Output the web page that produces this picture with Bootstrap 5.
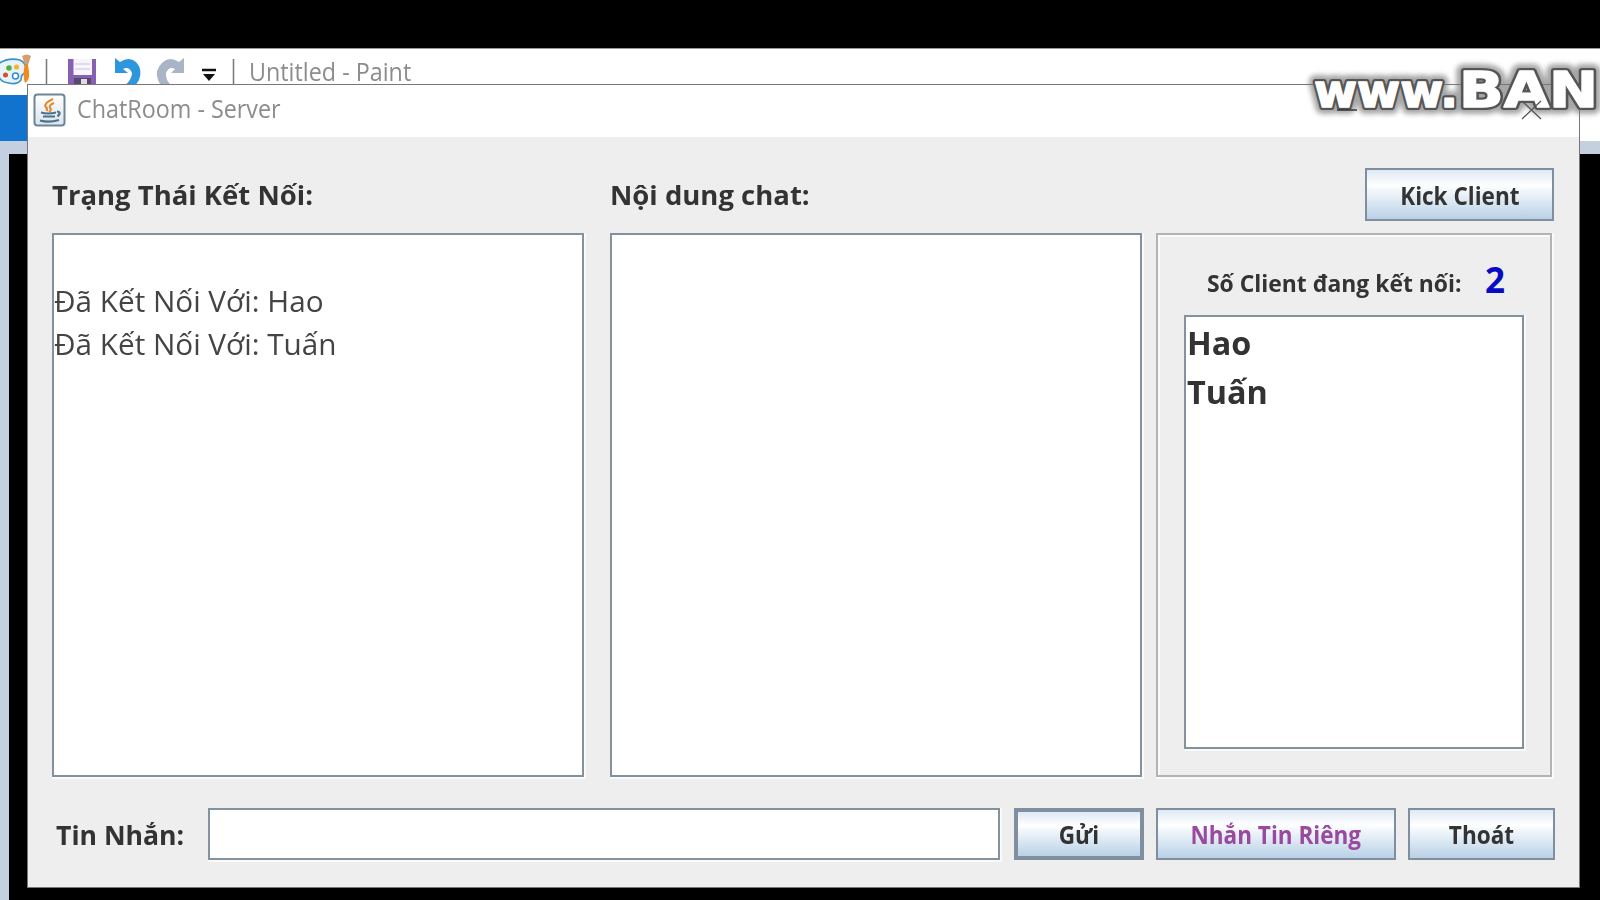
<!DOCTYPE html>
<html lang="vi">
<head>
<meta charset="utf-8">
<title>ChatRoom - Server</title>
<link href="https://cdn.jsdelivr.net/npm/bootstrap@5.3.0/dist/css/bootstrap.min.css" rel="stylesheet">
<style>
body{background:#000;width:1600px;height:900px;overflow:hidden;padding-top:48px;font-family:"Open Sans","Noto Sans",sans-serif;color:#333}
.paint{height:852px;background:#c4d0e0}
.paint-title{height:47px;background:#fff;border-top:1px solid #999}
.paint-ribbon{height:46px;background:linear-gradient(90deg,#1273cf 40px,#fff 40px)}
.paint-canvas{margin:13px 0 0 9px;height:746px;background:#000}
.fit{display:inline-block;white-space:nowrap;line-height:1;transform:scaleX(var(--s,1));transform-origin:0 50%}
.btn .fit{transform-origin:50% 50%;padding-top:3px}
.win{left:27px;top:84px;width:1553px;height:804px;background:#eee;border:1px solid #777}
.win-title{height:52px;background:#fff;padding-left:5px;gap:11px}
.cap{font-size:25px;color:#8c8c8c;--s:.933}
.paint-cap{padding:4px 0 0 9px}
.win-title .cap{padding-bottom:4px}
.win-body{padding:31px 25px 27px 24px;height:750px}
.head{height:53px}
.head .btn{width:189px;height:53px}
.lbl{font-size:27px;font-weight:700}
.head .lbl{padding-top:2px;--s:1.018}
.sunk{background:#fff;border:2px solid #84929f;box-shadow:1px 1px 0 1px #fafafa}
.panes{height:544px;margin-top:12px}
.pane{width:532px;height:544px;font-size:30px;line-height:42.5px;padding-top:45px;color:#444;--s:.99}
.pane .fit{line-height:42.5px}
.side{width:396px;height:544px;border:2px solid #b3b3b3;box-shadow:inset 2px 2px 0 #fafafa,1px 1px 0 1px #fafafa;padding:24px 26px 26px 26px}
.count{height:56px;padding-left:23px}
.count .lbl{width:278px;font-size:24px;padding-top:6px;--s:.953}
.num{font-size:35px;font-weight:700;color:#0a0ac4;margin-top:-5px}
.names{height:434px;font-size:33px;font-weight:700;line-height:49px;padding-left:1px;--s:.98}
.names .fit{line-height:49px;display:block;position:relative;top:1px}
.foot{height:52px;margin-top:31px}
.foot .lbl{width:156px;padding:3px 0 0 4px;--s:.985}
.btn{--bs-btn-border-radius:0;border:2px solid #7f8f9f;background:linear-gradient(#dfe9f4 0,#fff 32%,#f4f8fc 40%,#b9d1e6 100%);padding:0;font-size:24.5px;font-weight:700;color:#333;line-height:1;--s:.92}
.btn-def{border-width:4px}
.violet{color:#9a4a9e}
.mark-w{left:1280px;top:48px}
</style>
</head>
<body>
<div class="paint">
  <div class="paint-title d-flex">
    <svg width="240" height="46" viewBox="0 49 240 46">
      <path d="M-2 64Q8 57 20 60Q28 64 25 73Q21 74 21 80Q17 85 9 83Q0 82-2 75Z" fill="#e7f3fb" stroke="#3b91c4" stroke-width="1.6"/>
      <circle cx="9" cy="68" r="2.8" fill="#55ae3c"/><circle cx="16.500" cy="67" r="2.600" fill="#f4b52c"/><circle cx="5.500" cy="75" r="2.500" fill="#d94b32"/><circle cx="15.500" cy="76" r="3" fill="#fff" stroke="#2f8cd0" stroke-width="1.500"/>
      <path d="M22 56Q27 53 31 56L28 65H25Z" fill="#d19f72"/><path d="M25 64H28L29 72Q30 80 25 83Q22 75 25 64Z" fill="#f08a1d"/>
      <path d="M46.500 59V84M233.500 59V84" stroke="#777" stroke-width="1.500"/>
      <path d="M68 59H96V86H68Z" fill="#8560b5"/><path d="M73.500 59H92V75H73.500Z" fill="#f7f5fb"/><path d="M75 64H90M75 69H90" stroke="#d8d2e3" stroke-width="1.500"/><path d="M74 78H91V85H74Z" fill="#57486c"/><path d="M81 79H87V85H81Z" fill="#ddd"/>
      <path d="M115 58L120 62Q129 56 136 62Q143 69 139 80L135 86H124Q132 80 132 73Q129 66 123 69L128 73H115Z" fill="#2d96dc"/>
      <path d="M184 58L179 62Q170 56 163 62Q154 70 158 80L161 86H172Q165 80 166 73Q169 66 175 69L171 73H184Z" fill="#a9b4c6"/>
      <path d="M202 70H216" stroke="#111" stroke-width="2.500"/><path d="M203 74H215L209 81Z" fill="#111"/>
    </svg>
    <div class="cap paint-cap"><span class="fit">Untitled - Paint</span></div>
  </div>
  <div class="paint-ribbon"></div>
  <div class="paint-canvas"></div>
</div>

<main class="win position-absolute">
  <div class="win-title d-flex align-items-center">
    <svg width="33" height="34" viewBox="0 0 33 34" style="margin-top:-2px">
      <defs><linearGradient id="jb" x2="0" y2="1"><stop stop-color="#fff"/><stop offset="1" stop-color="#dbe5ee"/></linearGradient></defs>
      <rect x="1.500" y="1.500" width="30" height="31" rx="3" fill="url(#jb)" stroke="#6d8599" stroke-width="2"/>
      <path d="M20 6Q11 10 12.500 13.500Q15 16 13.500 18M21 10Q16 12 17 14.500Q19 17 16 19" fill="none" stroke="#e9892f" stroke-width="2.200"/>
      <path d="M8 19.500Q15 21.500 23 19.500M24 18.500Q29 19 24.500 23.500M10 23.500H22M7 27.500Q16 30 26 27" fill="none" stroke="#4b7089" stroke-width="2.200"/>
    </svg>
    <div class="cap"><span class="fit">ChatRoom - Server</span></div>
  </div>
  <div class="win-body">
    <div class="head d-flex align-items-center">
      <div class="lbl" style="width:558px"><span class="fit">Trạng Thái Kết Nối:</span></div>
      <div class="lbl"><span class="fit">Nội dung chat:</span></div>
      <button class="btn ms-auto"><span class="fit">Kick Client</span></button>
    </div>
    <div class="panes d-flex">
      <div class="pane sunk"><span class="fit">Đã Kết Nối Với: Hao</span><br><span class="fit">Đã Kết Nối Với: Tuấn</span></div>
      <div class="pane sunk" style="margin-left:26px"></div>
      <div class="side" style="margin-left:14px">
        <div class="count d-flex align-items-start">
          <div class="lbl"><span class="fit">Số Client đang kết nối:</span></div>
          <div class="num"><span class="fit">2</span></div>
        </div>
        <div class="names sunk"><span class="fit">Hao</span><span class="fit">Tuấn</span></div>
      </div>
    </div>
    <div class="foot d-flex">
      <div class="lbl align-self-center"><span class="fit">Tin Nhắn:</span></div>
      <div class="sunk" style="width:792px"></div>
      <button class="btn btn-def" style="width:130px;margin-left:14px"><span class="fit">Gửi</span></button>
      <button class="btn violet" style="width:240px;margin-left:12px"><span class="fit">Nhắn Tin Riêng</span></button>
      <button class="btn" style="width:147px;margin-left:12px;margin-right:-2px"><span class="fit">Thoát</span></button>
    </div>
  </div>
</main>

<svg class="mark-w position-absolute" width="320" height="90" viewBox="1280 48 320 90">
  <defs><filter id="soft" x="-10%" y="-30%" width="120%" height="160%"><feGaussianBlur stdDeviation="2.500"/></filter></defs>
  <g font-family="DejaVu Sans" font-weight="700" stroke-linejoin="round">
    <g stroke="#777" fill="#777" stroke-width="14" opacity=".65" filter="url(#soft)">
      <text x="1314" y="107" font-size="47" textLength="144" lengthAdjust="spacingAndGlyphs">www.</text>
      <text x="1459" y="107" font-size="50" textLength="139" lengthAdjust="spacingAndGlyphs">BAN</text>
    </g>
    <g stroke="#555" fill="#555" stroke-width="6">
      <text x="1314" y="107" font-size="47" textLength="144" lengthAdjust="spacingAndGlyphs">www.</text>
      <text x="1459" y="107" font-size="50" textLength="139" lengthAdjust="spacingAndGlyphs">BAN</text>
    </g>
    <g stroke="#fff" fill="#fff" stroke-width="1.5">
      <text x="1314" y="107" font-size="47" textLength="144" lengthAdjust="spacingAndGlyphs">www.</text>
      <text x="1459" y="107" font-size="50" textLength="139" lengthAdjust="spacingAndGlyphs">BAN</text>
    </g>
  </g>
  <path d="M1337 110H1357" stroke="#333" stroke-width="1.500"/>
  <path d="M1522 101L1541 119M1541 101L1522 119" stroke="#555" stroke-width="1.300"/>
</svg>
<script src="https://cdn.jsdelivr.net/npm/bootstrap@5.3.0/dist/js/bootstrap.bundle.min.js"></script>
</body>
</html>
